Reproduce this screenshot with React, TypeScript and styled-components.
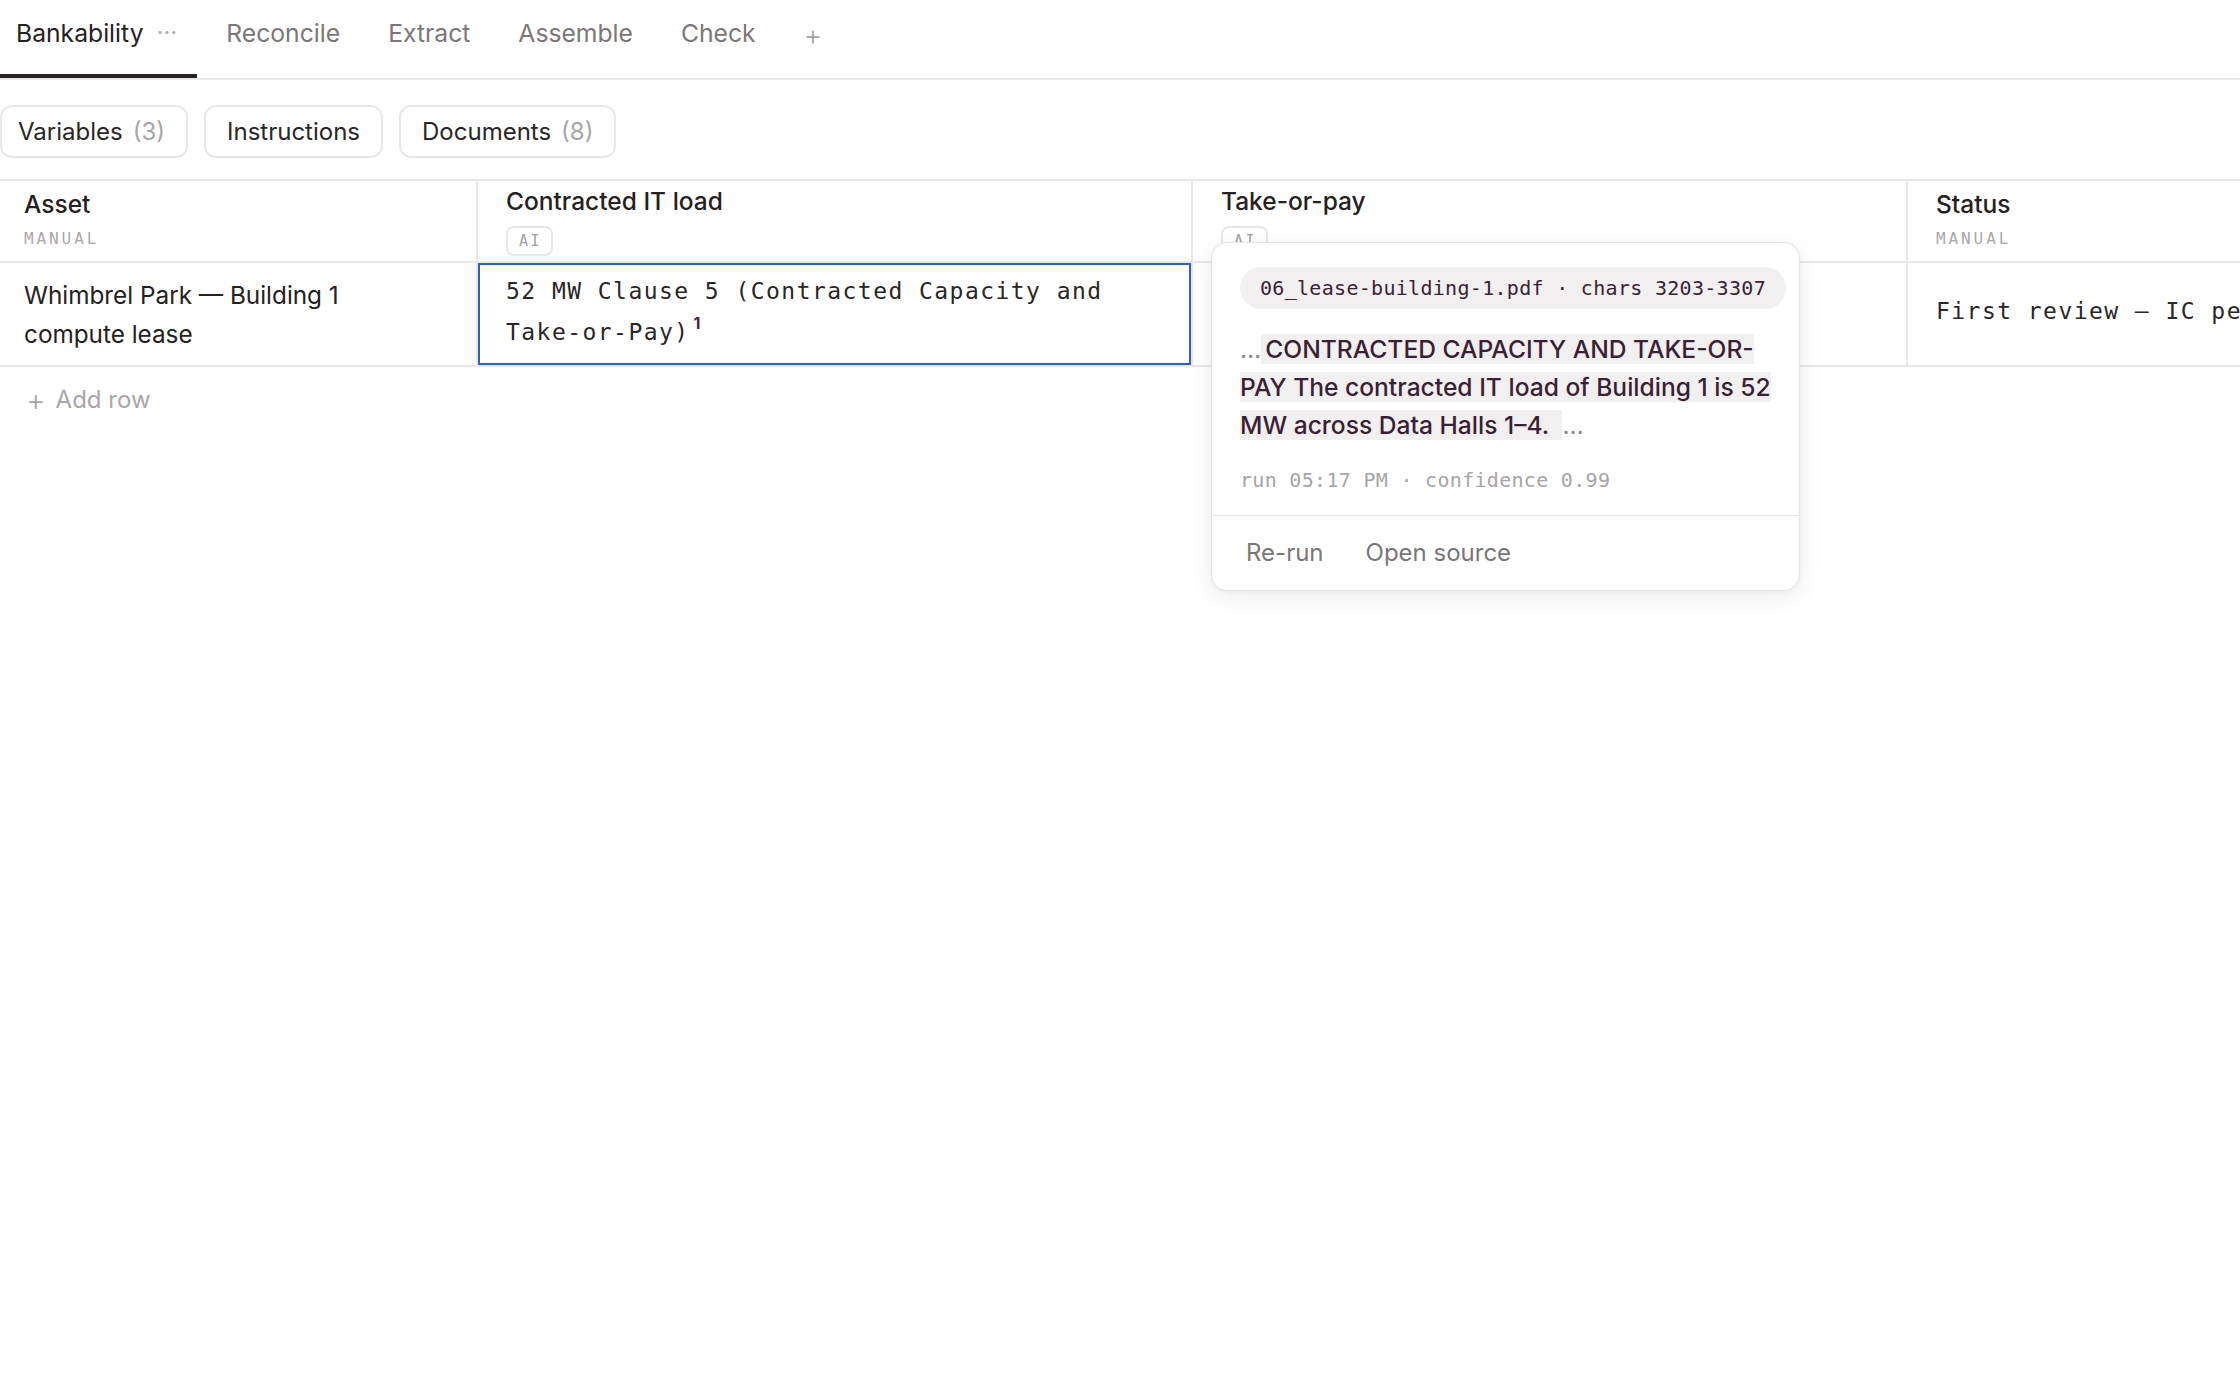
import React from "react";
import styled, { createGlobalStyle, css } from "styled-components";

const GlobalStyle = createGlobalStyle`
  html, body {
    margin: 0;
    padding: 0;
    background: #ffffff;
    overflow: hidden;
  }
  body {
    font-family: Inter, "Noto Sans", "Liberation Sans", sans-serif;
    color: #252122;
    -webkit-font-smoothing: antialiased;
  }
  * { box-sizing: border-box; }
`;

const SANS = `Inter, "Noto Sans", "Liberation Sans", sans-serif`;
const MONO = `"DejaVu Sans Mono", "Liberation Mono", monospace`;
const LINE = "#e9e8e8";

const Page = styled.div`
  min-height: 100vh;
  background: #fff;
`;

/* ---------- sheet tabs ---------- */

const TabBar = styled.nav`
  display: flex;
  align-items: flex-end;
  border-bottom: 2px solid ${LINE};
`;

const Tab = styled.div<{ $active?: boolean }>`
  display: flex;
  align-items: center;
  height: 78px;
  padding: 16px 24px 24px;
  border-bottom: 4px solid transparent;
  font-family: ${SANS};
  font-size: 24.7px;
  line-height: 34px;
  color: #7b7778;
  white-space: nowrap;
  cursor: pointer;

  ${(p) =>
    p.$active &&
    css`
      padding: 16px 20px 24px 16px;
      margin-right: 5px;
      color: #262224;
      border-bottom-color: #262224;
    `}
`;

const TabMenu = styled.span`
  margin-left: 13px;
  color: #b3b0b1;
  font-size: 24px;
`;

const AddTab = styled.div`
  height: 78px;
  padding: 18px 24px 0;
  font-family: ${SANS};
  font-size: 28px;
  font-weight: 300;
  line-height: 34px;
  color: #a4a1a2;
`;

/* ---------- toolbar ---------- */

const Toolbar = styled.div`
  display: flex;
  gap: 16px;
  padding: 25px 0 21px;
`;

const PillButton = styled.button`
  display: inline-flex;
  align-items: center;
  gap: 10px;
  height: 53px;
  padding: 0 21px 0 16px;
  border: 2px solid ${LINE};
  border-radius: 12px;
  background: #fff;
  font-family: ${SANS};
  font-size: 24px;
  color: #2a2627;
  cursor: pointer;

  & + & {
    padding-left: 21px;
  }
`;

const Count = styled.span`
  color: #a8a5a6;
`;

/* ---------- grid ---------- */

const Sheet = styled.div`
  display: grid;
  grid-template-columns: 478px 715px 715px 715px;
  border-top: 2px solid ${LINE};
  width: max-content;
  min-width: 100%;
`;

const HeadCell = styled.div<{ $first?: boolean }>`
  position: relative;
  display: flex;
  flex-direction: column;
  justify-content: flex-start;
  height: 82px;
  padding: 5px 28px 0 ${(p) => (p.$first ? "24px" : "28px")};
  border-right: 2px solid ${LINE};
  border-bottom: 2px solid ${LINE};
`;

const HeadTitle = styled.div<{ $tall?: boolean }>`
  padding-top: ${(p) => (p.$tall ? "0" : "3px")};
  font-family: ${SANS};
  font-size: 24.5px;
  font-weight: 500;
  line-height: 30px;
  color: #252122;
`;

const Kind = styled.div`
  margin-top: 10px;
  font-family: ${MONO};
  font-size: 16px;
  line-height: 20px;
  letter-spacing: 2.9px;
  color: #aaa7a8;
`;

const AiBadge = styled.span`
  align-self: flex-start;
  display: inline-flex;
  align-items: center;
  height: 30px;
  margin-top: 10px;
  padding: 0 9px 0 11px;
  border: 2px solid ${LINE};
  border-radius: 8px;
  font-family: ${MONO};
  font-size: 15px;
  letter-spacing: 2.5px;
  color: #a3a0a1;
`;

const Cell = styled.div<{ $first?: boolean; $selected?: boolean }>`
  display: flex;
  align-items: center;
  height: 104px;
  padding: 0 28px 0 ${(p) => (p.$first ? "24px" : "28px")};
  border-right: 2px solid ${LINE};
  border-bottom: 2px solid ${LINE};

  ${(p) =>
    p.$selected &&
    css`
      box-shadow: inset 0 0 0 2px #2f5ec6;
    `}
`;

const AssetName = styled.div`
  max-width: 400px;
  padding-top: 2px;
  font-family: ${SANS};
  font-size: 24.3px;
  line-height: 39px;
  color: #252122;
`;

const MonoValue = styled.div`
  padding-bottom: 4px;
  font-family: ${MONO};
  font-size: 23px;
  line-height: 41.5px;
  letter-spacing: 1.45px;
  color: #2a2627;
`;

const Cite = styled.sup`
  margin-left: 4px;
  font-family: ${SANS};
  font-size: 16px;
  font-weight: 700;
  line-height: 0;
  letter-spacing: 0;
  vertical-align: 11px;
  color: #4a1f43;
`;

const AddRow = styled.div`
  display: flex;
  align-items: center;
  gap: 10px;
  padding: 16px 26px;
  font-family: ${SANS};
  font-size: 24px;
  line-height: 34px;
  color: #a9a6a7;
  cursor: pointer;
`;

const AddGlyph = styled.span`
  font-size: 30px;
  font-weight: 300;
  line-height: 34px;
`;

/* ---------- citation popover ---------- */

const Popover = styled.div`
  position: absolute;
  top: 61px;
  left: 18px;
  z-index: 10;
  width: 589px;
  background: #fff;
  border: 1px solid #e4e2e3;
  border-radius: 16px;
  box-shadow: 0 6px 24px rgba(0, 0, 0, 0.08), 0 1px 4px rgba(0, 0, 0, 0.04);
`;

const PopoverBody = styled.div`
  padding: 24px 14px 21px 28px;
`;

const SourceChip = styled.div`
  display: inline-flex;
  align-items: center;
  height: 42px;
  padding: 0 20px;
  border-radius: 21px;
  background: #f1eff0;
  font-family: ${MONO};
  font-size: 20px;
  letter-spacing: 0.3px;
  color: #3b2236;
  white-space: nowrap;
`;

const Excerpt = styled.p`
  margin: 21px 0 0;
  font-family: ${SANS};
  font-size: 24.6px;
  font-weight: 500;
  line-height: 38px;
  color: #3b1f35;
`;

const Ellipsis = styled.span`
  font-weight: 400;
  color: #8d898b;
`;

const Highlight = styled.mark`
  padding: 0 0 0 4px;
  background: #f1eff0;
  color: #3b1f35;
`;

const Meta = styled.div`
  margin-top: 22px;
  font-family: ${MONO};
  font-size: 20px;
  line-height: 28px;
  letter-spacing: 0.3px;
  color: #a7a4a5;
`;

const PopoverFooter = styled.div`
  display: flex;
  gap: 14px;
  padding: 14px 20px;
  border-top: 1.5px solid #e8e6e7;
`;

const GhostButton = styled.button`
  padding: 6px 14px;
  border: none;
  background: transparent;
  font-family: ${SANS};
  font-size: 24px;
  line-height: 34px;
  color: #7a7677;
  cursor: pointer;
`;

export default function App() {
  return (
    <Page>
      <GlobalStyle />

      <TabBar>
        <Tab $active>
          Bankability<TabMenu>···</TabMenu>
        </Tab>
        <Tab>Reconcile</Tab>
        <Tab>Extract</Tab>
        <Tab>Assemble</Tab>
        <Tab>Check</Tab>
        <AddTab>+</AddTab>
      </TabBar>

      <Toolbar>
        <PillButton>
          Variables<Count>(3)</Count>
        </PillButton>
        <PillButton>Instructions</PillButton>
        <PillButton>
          Documents<Count>(8)</Count>
        </PillButton>
      </Toolbar>

      <Sheet>
        <HeadCell $first>
          <HeadTitle>Asset</HeadTitle>
          <Kind>MANUAL</Kind>
        </HeadCell>
        <HeadCell>
          <HeadTitle $tall>Contracted IT load</HeadTitle>
          <AiBadge>AI</AiBadge>
        </HeadCell>
        <HeadCell>
          <HeadTitle $tall>Take-or-pay</HeadTitle>
          <AiBadge>AI</AiBadge>
          <Popover role="dialog">
            <PopoverBody>
              <SourceChip>06_lease-building-1.pdf · chars 3203-3307</SourceChip>
              <Excerpt>
                <Ellipsis>…</Ellipsis>
                <Highlight>
                  CONTRACTED CAPACITY AND TAKE-OR-PAY The contracted IT load of
                  Building 1 is 52 MW across Data Halls 1–4.{"\u00a0 "}
                </Highlight>{" "}
                <Ellipsis>…</Ellipsis>
              </Excerpt>
              <Meta>run 05:17 PM · confidence 0.99</Meta>
            </PopoverBody>
            <PopoverFooter>
              <GhostButton>Re-run</GhostButton>
              <GhostButton>Open source</GhostButton>
            </PopoverFooter>
          </Popover>
        </HeadCell>
        <HeadCell>
          <HeadTitle>Status</HeadTitle>
          <Kind>MANUAL</Kind>
        </HeadCell>

        <Cell $first>
          <AssetName>Whimbrel Park — Building 1 compute lease</AssetName>
        </Cell>
        <Cell $selected>
          <MonoValue>
            52 MW Clause 5 (Contracted Capacity and Take-or-Pay)
            <Cite>1</Cite>
          </MonoValue>
        </Cell>
        <Cell />
        <Cell>
          <MonoValue>First review — IC pending</MonoValue>
        </Cell>
      </Sheet>

      <AddRow>
        <AddGlyph>+</AddGlyph>
        <span>Add row</span>
      </AddRow>
    </Page>
  );
}
